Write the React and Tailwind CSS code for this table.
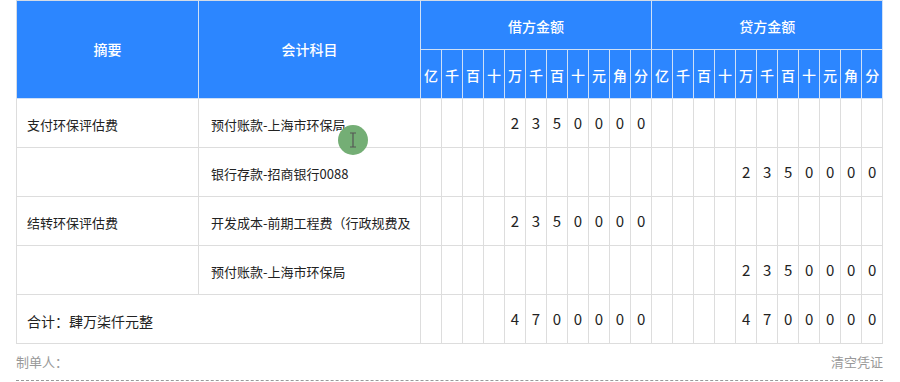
import React from "react";

const UNITS = ["亿", "千", "百", "十", "万", "千", "百", "十", "元", "角", "分"];

const rows = [
  { summary: "支付环保评估费", account: "预付账款-上海市环保局", debit: "2350000", credit: "" },
  { summary: "", account: "银行存款-招商银行0088", debit: "", credit: "2350000" },
  { summary: "结转环保评估费", account: "开发成本-前期工程费（行政规费及", debit: "2350000", credit: "" },
  { summary: "", account: "预付账款-上海市环保局", debit: "", credit: "2350000" },
];

function digitsOf(v) {
  const arr = Array(11).fill("");
  if (!v) return arr;
  const s = v.split("");
  const start = 11 - s.length;
  s.forEach((c, i) => (arr[start + i] = c));
  return arr;
}

function DigitCells({ value }) {
  return digitsOf(value).map((d, i) => (
    <td
      key={i}
      className="border border-[#dddddd] p-0 text-center align-middle text-[15px] text-[#222]"
    >
      {d}
    </td>
  ));
}

export default function App() {
  return (
    <div
      className="w-[900px] h-[382px] bg-white overflow-hidden pl-4"
      style={{ fontFamily: '"Noto Sans CJK SC", "Noto Sans", sans-serif' }}
    >
      <div className="relative w-[867px]">
        <table className="w-[867px] table-fixed border-collapse">
          <colgroup>
            <col className="w-[182px]" />
            <col className="w-[222px]" />
            {Array.from({ length: 22 }).map((_, i) => (
              <col key={i} className="w-[21px]" />
            ))}
          </colgroup>
          <thead>
            <tr className="h-[49px] bg-[#2c86ff] text-white">
              <th
                rowSpan={2}
                className="border border-[#cfe0f7] border-l-[#d4dbe6] border-t-[#d4dbe6] text-[14px] font-medium"
              >
                摘要
              </th>
              <th
                rowSpan={2}
                className="border border-[#cfe0f7] border-t-[#d4dbe6] text-[14px] font-medium"
              >
                会计科目
              </th>
              <th
                colSpan={11}
                className="border border-[#cfe0f7] border-t-[#d4dbe6] text-[14px] font-medium pt-[3px]"
              >
                借方金额
              </th>
              <th
                colSpan={11}
                className="border border-[#cfe0f7] border-t-[#d4dbe6] text-[14px] font-medium pt-[3px]"
              >
                贷方金额
              </th>
            </tr>
            <tr className="h-[49px] bg-[#2c86ff] text-white">
              {[...UNITS, ...UNITS].map((u, i) => (
                <th
                  key={i}
                  className="border border-[#cfe0f7] p-0 pt-[2px] text-[14px] font-medium"
                >
                  {u}
                </th>
              ))}
            </tr>
          </thead>
          <tbody>
            {rows.map((r, i) => (
              <tr key={i} className="h-[49px]">
                <td className="border border-[#dddddd] pl-[10px] pt-[4px] text-[13px] text-[#222] whitespace-nowrap">
                  {r.summary}
                </td>
                <td className="border border-[#dddddd] pl-[12px] pt-[4px] text-[13px] text-[#222] whitespace-nowrap overflow-hidden">
                  {r.account}
                </td>
                <DigitCells value={r.debit} />
                <DigitCells value={r.credit} />
              </tr>
            ))}
            <tr className="h-[49px]">
              <td
                colSpan={2}
                className="border border-[#dddddd] pl-[10px] pt-[4px] text-[14px] text-[#222] whitespace-nowrap"
              >
                合计：肆万柒仟元整
              </td>
              <DigitCells value="4700000" />
              <DigitCells value="4700000" />
            </tr>
          </tbody>
        </table>

        <div className="absolute left-[322px] top-[125px] w-[30px] h-[30px] rounded-full bg-[#74ae75] flex items-center justify-center">
          <svg width="8" height="16" viewBox="0 0 8 16" fill="none" stroke="#555" strokeWidth="1.2">
            <path d="M1 1h6M1 15h6M4 1v14" />
          </svg>
        </div>

        <div className="flex justify-between items-center h-[36px] text-[13px] text-[#999]">
          <span>制单人：</span>
          <span>清空凭证</span>
        </div>
        <div className="border-t border-dashed border-[#999]" />
      </div>
    </div>
  );
}
